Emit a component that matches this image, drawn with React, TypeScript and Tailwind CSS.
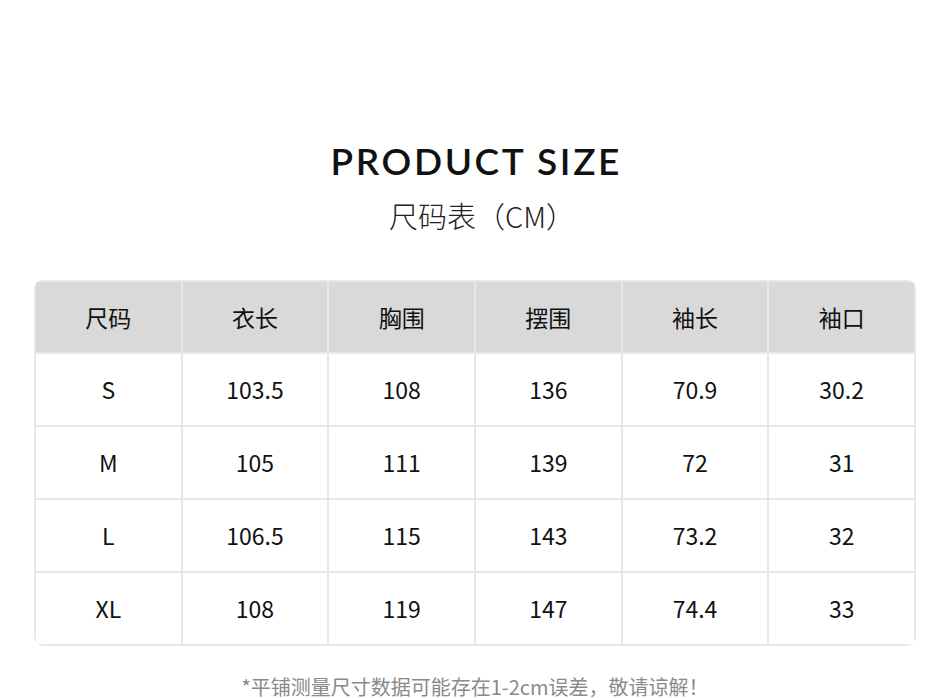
import React from "react";

const headers = ["尺码", "衣长", "胸围", "摆围", "袖长", "袖口"];

const rows = [
  ["S", "103.5", "108", "136", "70.9", "30.2"],
  ["M", "105", "111", "139", "72", "31"],
  ["L", "106.5", "115", "143", "73.2", "32"],
  ["XL", "108", "119", "147", "74.4", "33"],
];

const cjk = { fontFamily: '"Noto Sans CJK SC", "Noto Sans", sans-serif' };

const App = () => {
  return (
    <div className="w-[950px] h-[698px] overflow-hidden bg-white" style={cjk}>
      <div className="pt-[139px] flex flex-col items-center">
        <h1
          className="text-[37px] leading-[44px] font-semibold tracking-[0.07em] text-[#111] pl-[0.07em]"
          style={{ fontFamily: '"Lato", "Liberation Sans", sans-serif' }}
        >
          PRODUCT SIZE
        </h1>
        <p className="mt-[13px] pl-[14px] text-[29px] leading-[38px] font-light text-[#222]">
          尺码表（CM）
        </p>
      </div>

      <div className="mt-[46px] mx-[34px] grid grid-cols-6 gap-[2px] p-[2px] bg-[#e8e8e8] rounded-[9px] overflow-hidden">
        {headers.map((h) => (
          <div
            key={h}
            className="h-[70px] bg-[#d9d9d9] flex items-center justify-center text-[23px] text-[#111]"
          >
            {h}
          </div>
        ))}
        {rows.map((r) =>
          r.map((c, i) => (
            <div
              key={r[0] + i}
              className="h-[71px] bg-white flex items-center justify-center text-[23px] text-[#111]"
            >
              {c}
            </div>
          ))
        )}
      </div>

      <p className="mt-[27px] text-center text-[20px] leading-[28px] text-[#8a8a8a]">
        *平铺测量尺寸数据可能存在1-2cm误差，敬请谅解！
      </p>
    </div>
  );
};

export default App;
